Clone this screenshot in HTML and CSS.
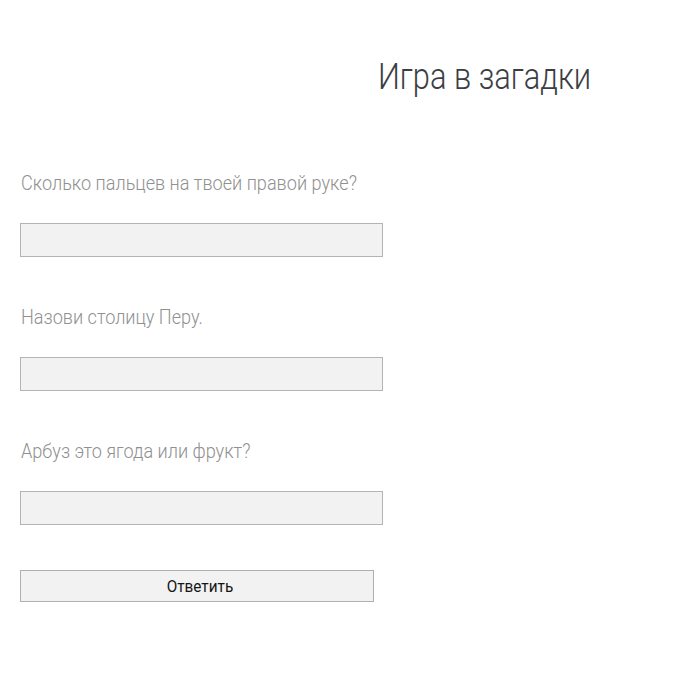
FILE: index.html
```html
<!DOCTYPE html>
<html lang="ru">
<head>
<meta charset="utf-8">
<link rel="stylesheet" href="styles.css">
</head>
<body>
<div class="page">
  <h1 class="title"><span class="narrow">Игра в загадки</span></h1>
  <form class="quiz">
    <div class="question">
      <p class="label"><span class="narrow">Сколько пальцев на твоей правой руке?</span></p>
      <input class="field" type="text">
    </div>
    <div class="question">
      <p class="label"><span class="narrow">Назови столицу Перу.</span></p>
      <input class="field" type="text">
    </div>
    <div class="question">
      <p class="label"><span class="narrow">Арбуз это ягода или фрукт?</span></p>
      <input class="field" type="text">
    </div>
    <button class="submit" type="button"><span class="btn-text">Ответить</span></button>
  </form>
</div>
</body>
</html>
```
FILE: styles.css
```css
html, body {
  margin: 0;
  padding: 0;
  background: #fff;
}
.page {
  font-family: Roboto, "Noto Sans", sans-serif;
  padding: 0 0 0 20px;
}
.narrow {
  display: inline-block;
  white-space: nowrap;
  transform: scaleX(0.905);
  transform-origin: left center;
}
.title {
  margin: 0;
  padding: 56px 0 0 358px;
  font-size: 36px;
  font-weight: 300;
  color: #3a3e44;
  line-height: 42px;
}
.title .narrow {
  transform: scaleX(0.855);
}
.quiz {
  display: flex;
  flex-direction: column;
  padding-top: 73px;
}
.question {
  display: flex;
  flex-direction: column;
}
.label {
  margin: 0 0 28px 0;
  font-size: 20px;
  font-weight: 300;
  color: #909090;
  line-height: 24px;
  padding-left: 1px;
}
.field {
  box-sizing: border-box;
  width: 363px;
  height: 34px;
  margin: 0 0 48px 0;
  background: #f2f2f2;
  border: 1px solid #b4b4b4;
  padding: 0 6px;
}
.submit {
  box-sizing: border-box;
  width: 354px;
  height: 32px;
  margin-top: -3px;
  background: #f2f2f2;
  border: 1px solid #b0b0b0;
  font-family: Roboto, sans-serif;
  font-size: 17px;
  color: #151515;
  padding: 0 0 0 6px;
}
.btn-text {
  display: inline-block;
  transform: scaleX(0.9);
}
```
